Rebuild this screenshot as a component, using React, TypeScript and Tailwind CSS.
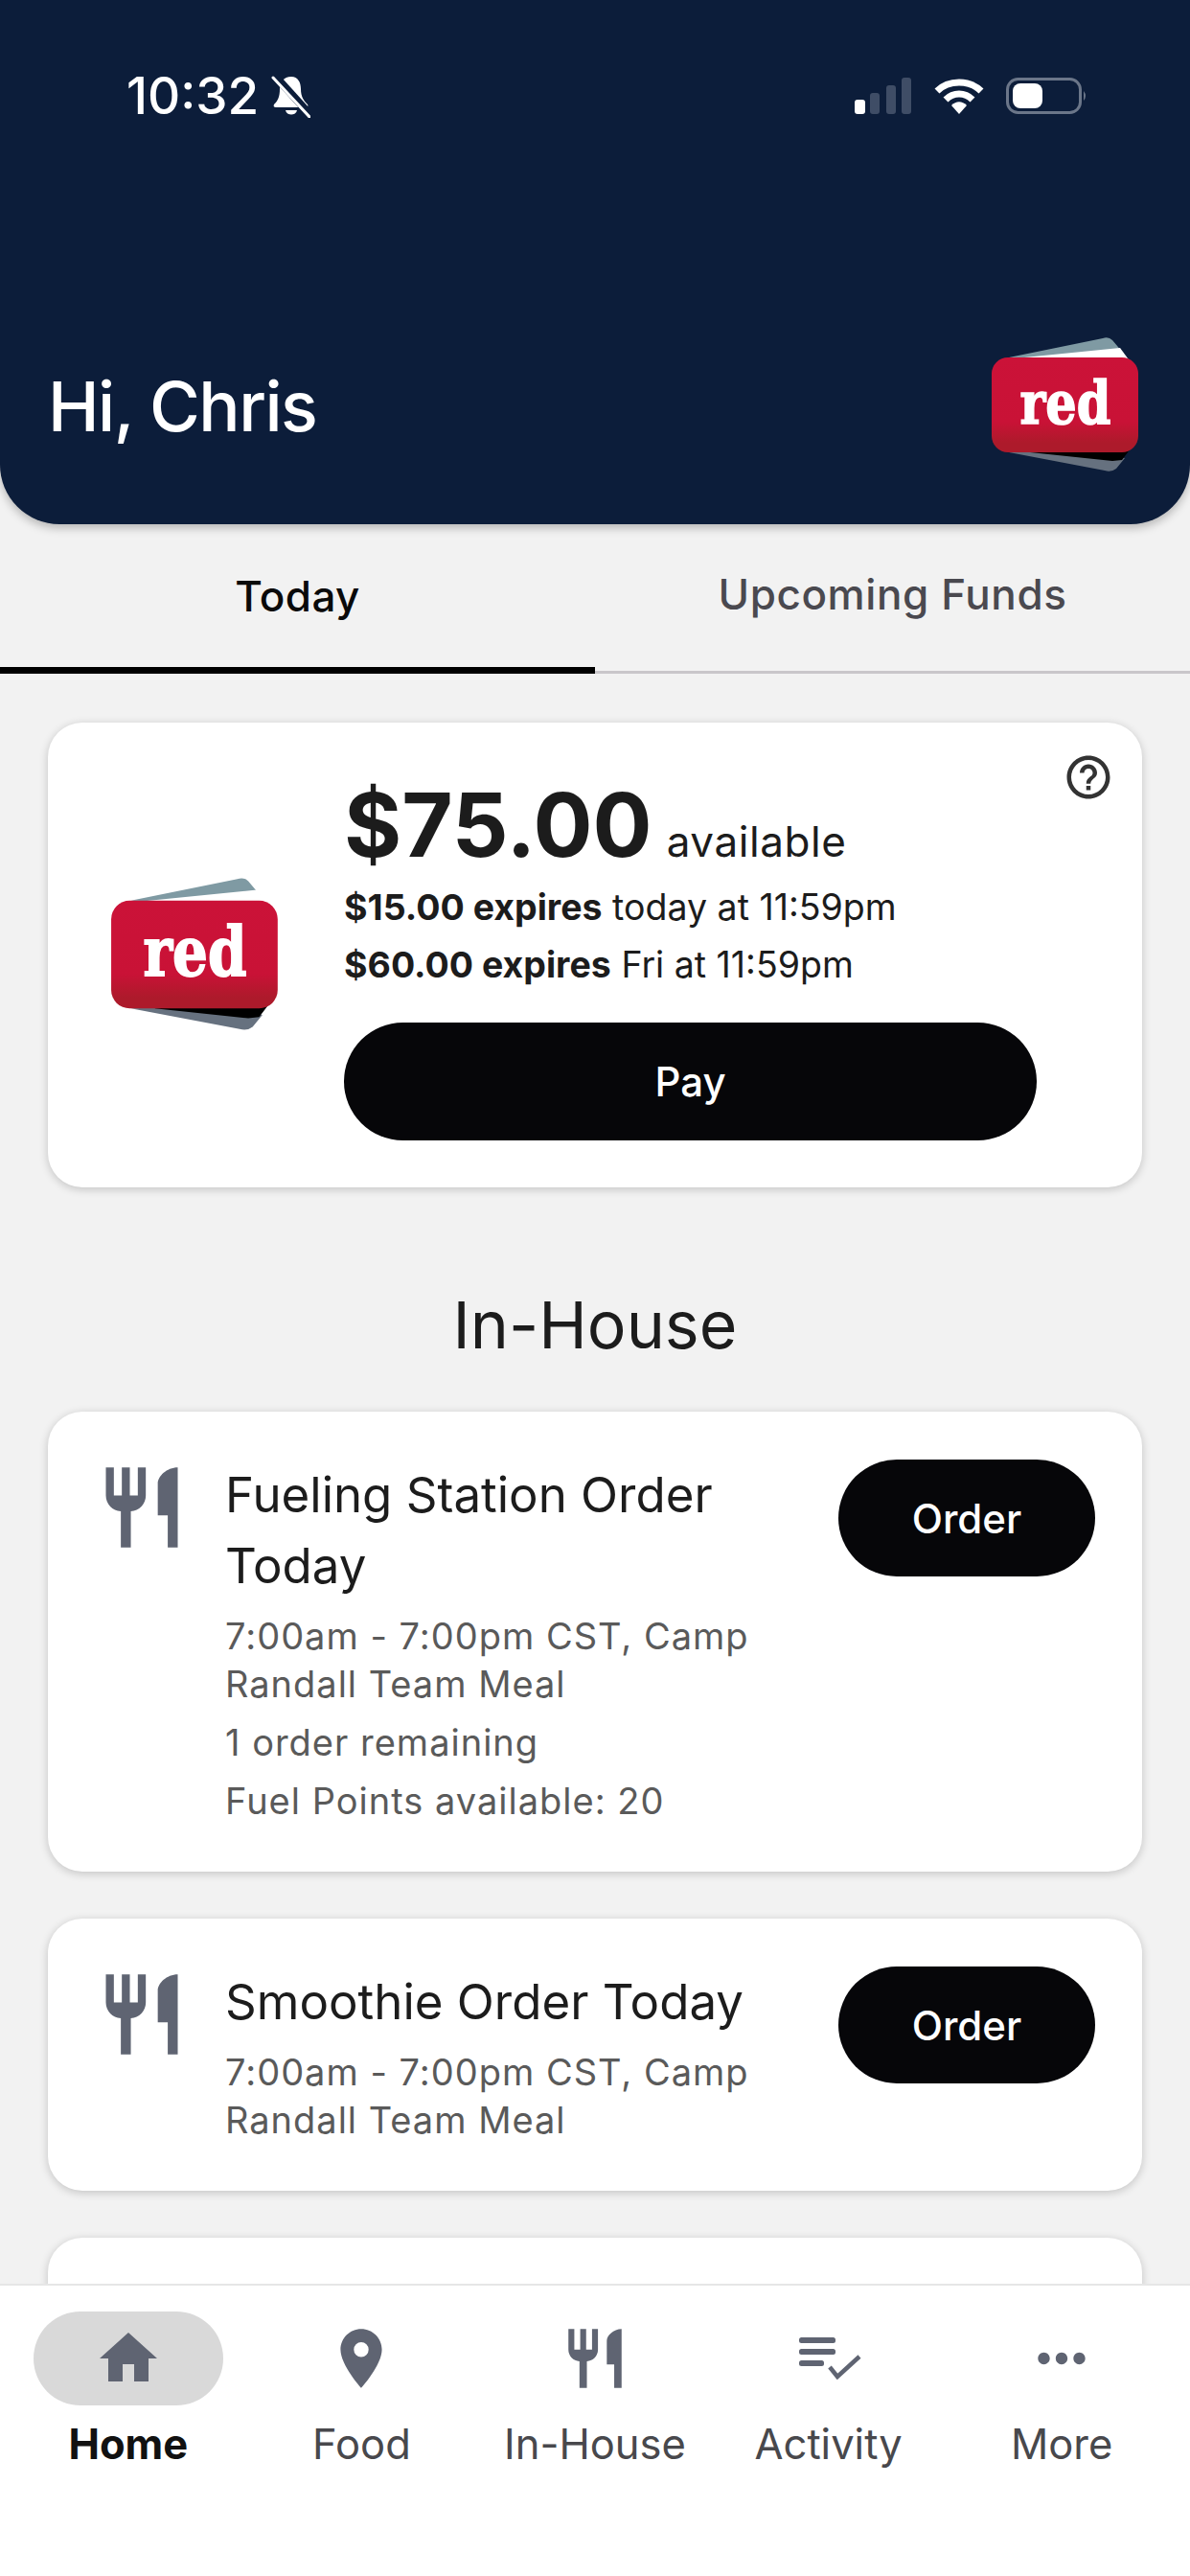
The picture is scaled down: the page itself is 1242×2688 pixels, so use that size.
const RESTAURANT = "M11 9H9V2H7v7H5V2H3v7c0 2.12 1.66 3.84 3.75 3.97V22h2.5v-9.03C11.34 12.84 13 11.12 13 9V2h-2v7zm5-3v8h2.5v8H21V2c-2.76 0-5 2.24-5 4z";

const Icon = ({ d, className }: { d: string; className: string }) => (
  <svg viewBox="0 0 24 24" className={className} fill="currentColor">
    <path d={d} />
  </svg>
);

const RedLogo = ({ className }: { className: string }) => (
  <svg viewBox="0 0 154 140" className={className}>
    <defs>
      <linearGradient id="redFill" x1="0" y1="0" x2="0" y2="1">
        <stop offset="0" stopColor="#cb1238" />
        <stop offset="0.68" stopColor="#c91236" />
        <stop offset="0.9" stopColor="#ad1a2b" />
      </linearGradient>
    </defs>
    <path d="M18 21 L116 1 Q122 -1 126 3 L137 16 L140 24 Z" fill="#7f9aa3" />
    <path d="M24 22 L134 11 L145 26 L140 30 Z" fill="#ffffff" />
    <path d="M18 120 L118 139 Q125 141 130 137 L139 126 L100 118 Z" fill="#66717f" />
    <path d="M40 120 L126 129 L136 128 L145 116 L60 112 Z" fill="#000000" />
    <rect x="0" y="21" width="153" height="99" rx="17" fill="url(#redFill)" />
    <text x="77" y="90" textAnchor="middle" fontFamily="'DejaVu Serif', serif" fontWeight="700" fontSize="62" fill="#ffffff" stroke="#ffffff" strokeWidth="1.6" textLength="95" lengthAdjust="spacingAndGlyphs">red</text>
  </svg>
);

const StatusBar = () => (
  <div className="flex items-center justify-between pl-[132px] pr-[107px] pt-[72px]">
    <div className="flex items-center gap-[13px]">
      <span className="text-[53px] leading-[56px] font-medium text-white">10:32</span>
      <svg viewBox="0 0 41 45" className="w-[41px] h-[45px]">
        <path d="M21 2c7 0 10 6 10 13 0 8 3 12 7 16 1 2 0 3-2 3H5c-2 0-3-1-2-3 4-4 6-8 6-16 0-7 4-13 12-13z" fill="#fff" />
        <path d="M15 37h12c-1 6-11 6-12 0z" fill="#fff" />
        <path d="M3 0 L41 42" stroke="#0c1d3a" strokeWidth="8" />
        <path d="M2 3 L40 44" stroke="#fff" strokeWidth="3" strokeLinecap="round" />
      </svg>
    </div>
    <div className="flex items-center">
      <svg viewBox="0 0 60 38" className="mr-[23px] w-[60px] h-[38px]">
        <rect x="0" y="23" width="11" height="15" rx="3" fill="#fff" />
        <rect x="16" y="16" width="10" height="22" rx="3" fill="#3f4d66" />
        <rect x="33" y="8" width="10" height="30" rx="3" fill="#3f4d66" />
        <rect x="49" y="0" width="10" height="38" rx="3" fill="#3f4d66" />
      </svg>
      <svg viewBox="0 0 52 38" className="mr-[23px] w-[52px] h-[38px]">
        <path d="M3 14 C15 2 37 2 49 14" stroke="#fff" strokeWidth="7" fill="none" />
        <path d="M12 23 C20 15 32 15 40 23" stroke="#fff" strokeWidth="7" fill="none" />
        <path d="M18 29 C23 24 29 24 34 29 L26 38 Z" fill="#fff" />
      </svg>
      <svg viewBox="0 0 85 38" className="w-[85px] h-[38px]">
        <rect x="1.5" y="1.5" width="76" height="35" rx="11" stroke="#6b7689" strokeWidth="3" fill="none" />
        <rect x="7" y="6" width="31" height="26" rx="8" fill="#fff" />
        <path d="M81 14 Q85 19 81 24 Z" fill="#6b7689" />
      </svg>
    </div>
  </div>
);

const OrderCard = ({ title, lines }: { title: string; lines: string[][] }) => (
  <div className="flex rounded-[36px] bg-white pt-[50px] pb-[49px] pl-[48px] pr-[49px] shadow-[0_2px_10px_rgba(0,0,0,0.2)]">
    <Icon d={RESTAURANT} className="w-[100px] h-[100px] shrink-0 text-[#5f6472]" />
    <div className="flex-1 pl-[37px] pr-[20px]">
      <div className="text-[51px] leading-[74px] text-[#1c1c1c]">{title}</div>
      {lines.map((group, i) => (
        <div key={i} className="mt-[11px] text-[38px] leading-[50px] tracking-[1px] text-[#5a5a5a]">
          {group.map((l) => <div key={l}>{l}</div>)}
        </div>
      ))}
    </div>
    <button className="h-[122px] w-[268px] shrink-0 rounded-full bg-[#060609] text-[42px] font-medium text-white">Order</button>
  </div>
);

const NavItem = ({ label, active, children }: { label: string; active?: boolean; children: React.ReactNode }) => (
  <div className="flex flex-col items-center">
    <div className={`flex h-[98px] w-[198px] items-center justify-center rounded-full ${active ? "bg-[#d9d9d9]" : ""}`}>
      {children}
    </div>
    <div className={`mt-[15px] text-[43.5px] leading-[50px] ${active ? "font-bold text-[#111]" : "text-[#48484c]"}`}>{label}</div>
  </div>
);

export default function App() {
  return (
    <div className="flex h-[2688px] w-[1242px] flex-col overflow-hidden bg-[#f2f2f2] font-['Inter',sans-serif]">
      <header className="relative z-10 flex h-[547px] shrink-0 flex-col justify-between rounded-b-[62px] bg-[#0c1d3a] shadow-[0_4px_10px_rgba(0,0,0,0.25)]">
        <StatusBar />
        <div className="flex items-end justify-between pl-[50px] pr-[53px] pb-[55px]">
          <div className="pb-[23px] text-[72px] leading-[90px] font-medium tracking-[-1.5px] text-white">Hi, Chris</div>
          <RedLogo className="h-[140px] w-[154px]" />
        </div>
      </header>

      <div className="flex h-[156px] shrink-0 border-b-[3px] border-[#c9c6ca]">
        <div className="-mb-[3px] flex w-1/2 items-center justify-center rounded-tr-[4px] border-b-[7px] border-black text-[44px] font-medium tracking-[0.4px] text-[#0a0a0a]">Today</div>
        <div className="flex w-1/2 items-center justify-center pb-[7px] text-[44px] font-medium tracking-[0.6px] text-[#4a494f]">Upcoming Funds</div>
      </div>

      <main className="flex-1 overflow-hidden px-[50px] pt-[51px]">
        <div className="relative flex h-[485px] rounded-[36px] bg-white pl-[66px] shadow-[0_2px_10px_rgba(0,0,0,0.2)]">
          <Icon
            d="M11 18h2v-2h-2v2zm1-16C6.48 2 2 6.48 2 12s4.48 10 10 10 10-4.48 10-10S17.52 2 12 2zm0 18c-4.41 0-8-3.59-8-8s3.59-8 8-8 8 3.59 8 8-3.59 8-8 8zm0-14c-2.21 0-4 1.79-4 4h2c0-1.1.9-2 2-2s2 .9 2 2c0 2-3 1.75-3 5h2c0-2.25 3-2.5 3-5 0-2.21-1.79-4-4-4z"
            className="absolute right-[29px] top-[30px] h-[54px] w-[54px] text-[#333]"
          />
          <RedLogo className="mt-[162px] h-[159px] w-[175px] shrink-0" />
          <div className="pl-[68px] pt-[52px]">
            <div className="flex items-baseline gap-[15px] text-[#1c1c1c]">
              <span className="text-[92px] leading-[110px] font-bold">$75.00</span>
              <span className="text-[44px] tracking-[0.6px]">available</span>
            </div>
            <div className="mt-[1px] text-[37.5px] leading-[60px] text-[#1c1c1c]"><b className="font-bold">$15.00 expires</b> today at 11:59pm</div>
            <div className="text-[37.5px] leading-[60px] text-[#1c1c1c]"><b className="font-bold">$60.00 expires</b> Fri at 11:59pm</div>
            <button className="mt-[30px] h-[123px] w-[723px] rounded-full bg-[#060609] text-[42px] font-medium text-white">Pay</button>
          </div>
        </div>

        <h2 className="mt-[93px] mb-[41px] text-center text-[68px] leading-[100px] font-normal text-[#1c1c1c]">In-House</h2>

        <div className="flex flex-col gap-[49px]">
          <OrderCard
            title="Fueling Station Order Today"
            lines={[["7:00am - 7:00pm CST, Camp", "Randall Team Meal"], ["1 order remaining"], ["Fuel Points available: 20"]]}
          />
          <OrderCard title="Smoothie Order Today" lines={[["7:00am - 7:00pm CST, Camp", "Randall Team Meal"]]} />
          <div className="h-[200px] rounded-[36px] bg-white shadow-[0_2px_10px_rgba(0,0,0,0.2)]" />
        </div>
      </main>

      <nav className="relative z-10 grid h-[305px] shrink-0 grid-cols-5 border-t-2 border-[#e6e6e6] bg-white px-[12px] pt-[27px]">
        <NavItem label="Home" active>
          <Icon d="M10 20v-6h4v6h5v-8h3L12 3 2 12h3v8z" className="h-[72px] w-[72px] text-[#5f6472]" />
        </NavItem>
        <NavItem label="Food">
          <Icon d="M12 2C8.13 2 5 5.13 5 9c0 5.25 7 13 7 13s7-7.75 7-13c0-3.87-3.13-7-7-7zm0 9.5a2.5 2.5 0 010-5 2.5 2.5 0 010 5z" className="h-[74px] w-[74px] text-[#5f6472]" />
        </NavItem>
        <NavItem label="In-House">
          <Icon d={RESTAURANT} className="h-[74px] w-[74px] text-[#5f6472]" />
        </NavItem>
        <NavItem label="Activity">
          <svg viewBox="0 0 66 44" className="ml-[4px] h-[44px] w-[66px] text-[#5f6472]" fill="currentColor">
            <rect x="0" y="0" width="38" height="6" rx="2.5" />
            <rect x="0" y="12" width="38" height="6" rx="2.5" />
            <rect x="0" y="24" width="26" height="6" rx="2.5" />
            <path d="M32 31 L40 41 L63 20" fill="none" stroke="currentColor" strokeWidth="4.5" />
          </svg>
        </NavItem>
        <NavItem label="More">
          <Icon d="M6 10c-1.1 0-2 .9-2 2s.9 2 2 2 2-.9 2-2-.9-2-2-2zm12 0c-1.1 0-2 .9-2 2s.9 2 2 2 2-.9 2-2-.9-2-2-2zm-6 0c-1.1 0-2 .9-2 2s.9 2 2 2 2-.9 2-2-.9-2-2-2z" className="h-[74px] w-[74px] text-[#5f6472]" />
        </NavItem>
      </nav>
    </div>
  );
}
